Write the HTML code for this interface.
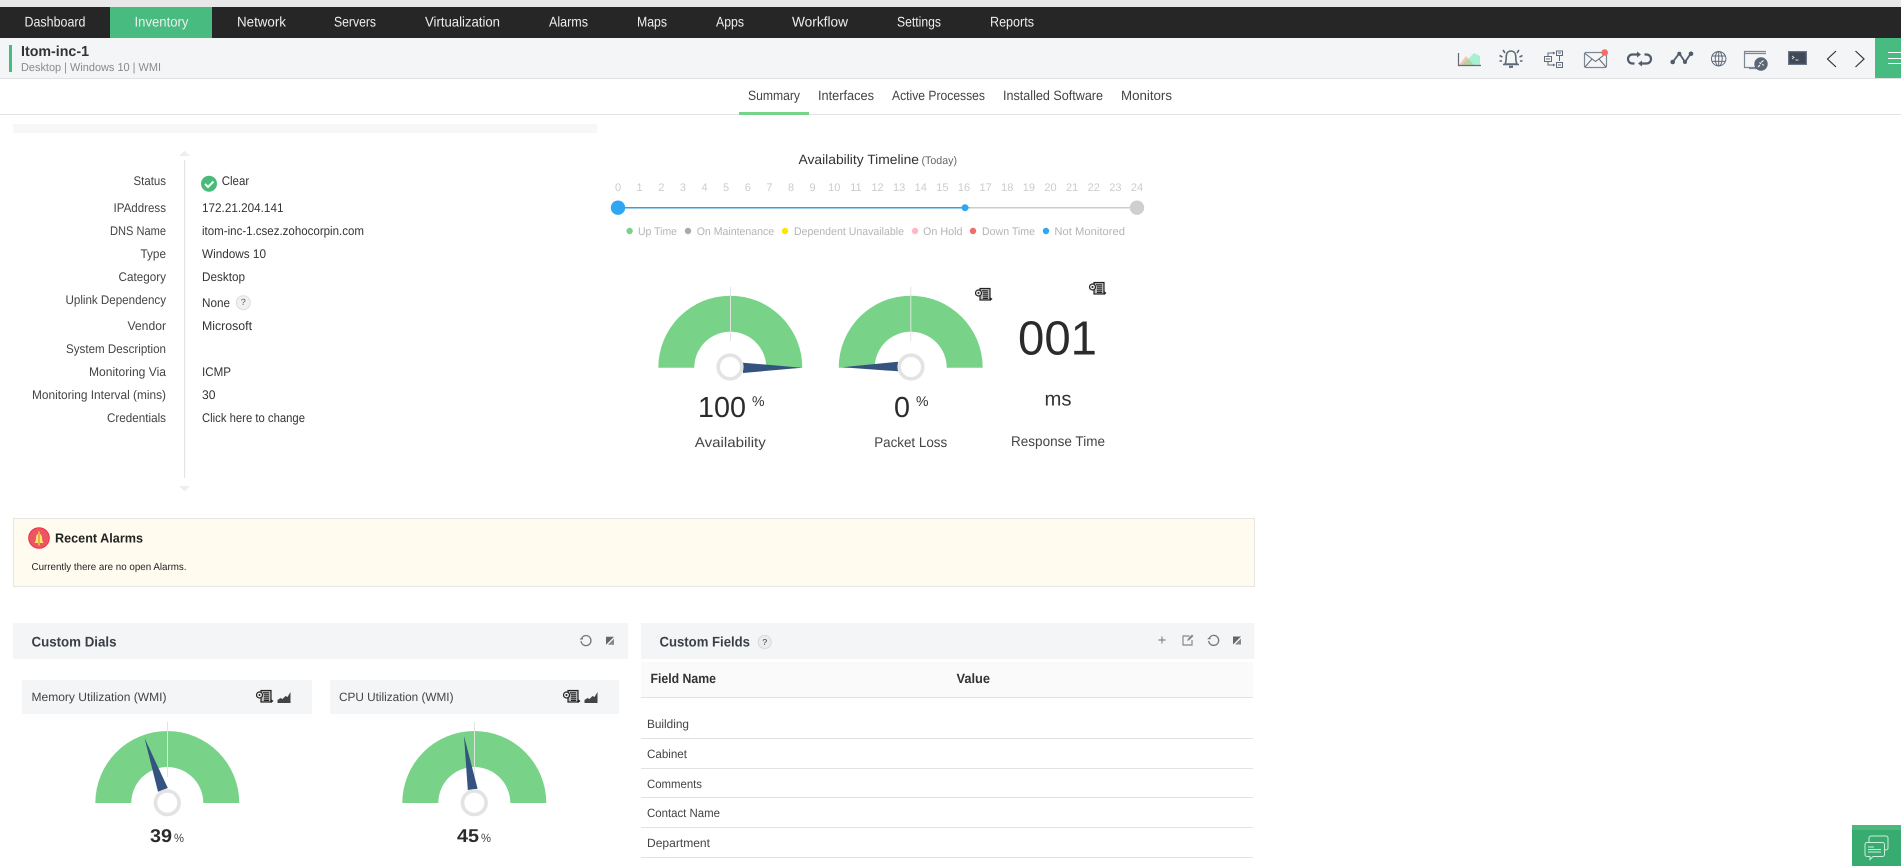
<!DOCTYPE html>
<html lang="en">
<head>
<meta charset="utf-8">
<title>Itom-inc-1</title>
<style>
html,body{margin:0;padding:0;background:#fff;width:1901px;height:866px;overflow:hidden}
svg{display:block;filter:blur(.35px)}
text{font-family:"Liberation Sans",sans-serif;text-rendering:geometricPrecision}
.nav{font-size:14px;fill:#eee}
.tab{font-size:13.5px;fill:#444}
.l{font-size:12.5px;fill:#444}
.v{font-size:12.5px;fill:#333}
.h{font-size:11px;fill:#ccc}
.lg{font-size:11px;fill:#b4b4b4}
.gl{font-size:14px;fill:#444}
.r{font-size:12px;fill:#444}
.ic{fill:none;stroke:#5f6a78;stroke-width:1.2}
</style>
</head>
<body>
<svg width="1901" height="866" viewBox="0 0 1901 866" xmlns="http://www.w3.org/2000/svg">
<defs>
<g id="rep">
<rect x="5" y="0.5" width="10" height="11.5" fill="#bbb" stroke="#222" stroke-width="1.2"/>
<path d="M7 2.800h6M8 4.800h5M8 6.800h5M8 8.800h5M8 10.500h5" stroke="#222" stroke-width="1.100"/>
<circle cx="3.500" cy="5" r="3" fill="#eee" stroke="#222" stroke-width="1.200"/>
<circle cx="3.500" cy="5" r="1" fill="#222"/>
<path d="M15 9l2.500 2-2.500 2z" fill="#222"/>
</g>
<path id="mini" d="M0 11V8l3-2 2 1 3-3 2 1 3-5v11z" fill="#444"/>
<g id="ref" fill="none" stroke="#777" stroke-width="1.300">
<path d="M-3.400-3.800A5 5 0 1 1-5 0.400"/><path d="M-6.500-1.200h3.400v-3.400z" fill="#777" stroke="none"/>
</g>
<g id="exp"><path d="M-4-4H4L-4 4z" fill="#666"/><path d="M4-2V4H-2z" fill="#888"/></g>
<path id="arc" d="M-72 0A72 72 0 0 1 72 0H36A36 36 0 0 0-36 0Z" fill="#78d389"/>
<g id="hub"><circle r="11.800" fill="#fff" stroke="#e3e3e3" stroke-width="3.600"/></g>
</defs>

<rect width="1901" height="866" fill="#fff"/>
<rect width="1901" height="7" fill="#e8e8e8"/>

<!-- nav -->
<rect y="7" width="1901" height="31" fill="#262626"/>
<rect x="110" y="7" width="102" height="31" fill="#48bb80"/>
<text class="nav" x="24.500" y="26.700" textLength="61" lengthAdjust="spacingAndGlyphs">Dashboard</text>
<text class="nav" x="134.500" y="26.700" textLength="54" lengthAdjust="spacingAndGlyphs">Inventory</text>
<text class="nav" x="237" y="26.700" textLength="49" lengthAdjust="spacingAndGlyphs">Network</text>
<text class="nav" x="334" y="26.700" textLength="42" lengthAdjust="spacingAndGlyphs">Servers</text>
<text class="nav" x="425" y="26.700" textLength="75" lengthAdjust="spacingAndGlyphs">Virtualization</text>
<text class="nav" x="549" y="26.700" textLength="39" lengthAdjust="spacingAndGlyphs">Alarms</text>
<text class="nav" x="637" y="26.700" textLength="30" lengthAdjust="spacingAndGlyphs">Maps</text>
<text class="nav" x="716" y="26.700" textLength="28" lengthAdjust="spacingAndGlyphs">Apps</text>
<text class="nav" x="792" y="26.700" textLength="56" lengthAdjust="spacingAndGlyphs">Workflow</text>
<text class="nav" x="897" y="26.700" textLength="44" lengthAdjust="spacingAndGlyphs">Settings</text>
<text class="nav" x="990" y="26.700" textLength="44" lengthAdjust="spacingAndGlyphs">Reports</text>

<!-- header -->
<rect y="38" width="1901" height="40" fill="#f4f5f7"/>
<rect y="78" width="1901" height="1" fill="#dfe1e3"/>
<rect x="9" y="45" width="3" height="27" fill="#48bb80"/>
<text x="21" y="56" font-size="14.500" font-weight="bold" fill="#333" textLength="68" lengthAdjust="spacingAndGlyphs">Itom-inc-1</text>
<text x="21" y="71" font-size="11.500" fill="#8a8a8a" textLength="140" lengthAdjust="spacingAndGlyphs">Desktop | Windows 10  | WMI</text>

<!-- toolbar icons -->
<path d="M1459 65L1466 56 1474 65z" fill="#f8c4ac"/>
<path d="M1462 65L1474 53 1480 56V65z" fill="#a8f0d4"/>
<path d="M1462 65L1466 60 1468.500 59 1474 65z" fill="#b9cfa8"/>
<path d="M1458.500 53V65.500H1481" class="ic"/>

<g class="ic" style="stroke-width:1.600">
<path d="M1505 64c1.200-2 1.200-4 1.200-7 0-4 2-6 4.800-6s4.800 2 4.800 6c0 3 0 5 1.200 7z"/>
<path d="M1503 64.500h16M1503 50l2 3M1519 50l-2 3M1499.500 55.500l3 1.500M1522.500 55.500l-3 1.500M1499.500 61h2.500M1522.500 61h-2.500"/>
<path d="M1509 66.800h4" style="stroke-width:2.200"/>
</g>

<g class="ic" style="stroke-width:1">
<rect x="1556.500" y="51" width="6" height="4.500"/>
<rect x="1544.500" y="56.500" width="7" height="5"/>
<rect x="1556.500" y="62.500" width="6" height="5"/>
<path d="M1548 56v-3h6M1548 62v3h6M1559.500 56v5M1546 59h4M1558 53h3M1558 65h3"/>
<path d="M1553 51.500l2.500 1.500-2.500 1.500zM1553 63.500l2.500 1.500-2.500 1.500z" fill="#5f6a78" stroke="none"/>
</g>

<rect x="1584.500" y="52.500" width="22" height="15" rx="1.500" fill="none" stroke="#7d8794" stroke-width="1.200"/>
<path d="M1585 53.500l10.500 8 10.500-8M1585 67l7-8M1606 67l-7-8" class="ic" style="stroke-width:1"/>
<circle cx="1604.700" cy="52.500" r="3.300" fill="#f56c6c"/>

<g fill="none" stroke="#515c6b" stroke-width="2.200">
<path d="M1638 54.500h-5.500a4.300 4.300 0 0 0 0 9h2"/>
<path d="M1641 63.500h5.500a4.300 4.300 0 0 0 0-9h-2"/>
</g>
<path d="M1637 51.500l4 3-4 3zM1642 60.500l-4 3 4 3z" fill="#515c6b"/>

<polyline points="1672.700,62 1679.300,53.300 1685,62 1691,53.300" fill="none" stroke="#515c6b" stroke-width="1.800"/>
<g fill="#515c6b"><circle cx="1672.700" cy="62" r="2.300"/><circle cx="1679.300" cy="53.800" r="2"/><circle cx="1685" cy="62" r="2"/><circle cx="1691" cy="53.800" r="2.300"/></g>

<g class="ic" style="stroke-width:1">
<circle cx="1718.700" cy="58.700" r="7.200"/>
<ellipse cx="1718.700" cy="58.700" rx="3.500" ry="7.200"/>
<path d="M1718.700 51.500v14.400M1712 56h13.400M1712 61.400h13.400"/>
</g>

<g fill="none" stroke="#7d8794" stroke-width="1.200">
<path d="M1766 51.500h-21.500v16H1756M1745 53.500h21M1749 68.500h8"/>
</g>
<circle cx="1761" cy="64" r="6.700" fill="#5b6675"/>
<path d="M1758 67l2-2M1761 62.500l2.500-2M1759.500 62.500l1.500 1.500M1762.500 64l1 1.500" stroke="#fff" stroke-width="1.100" fill="none"/>

<rect x="1788" y="51" width="19" height="14" fill="#6a7686"/>
<rect x="1789.200" y="52.200" width="16.600" height="11.600" fill="#3f4958"/>
<path d="M1792 56l2 1.500-2 1.500M1795.500 60h3" stroke="#ddd" stroke-width=".9" fill="none"/>

<polyline points="1836,51 1827.500,59 1836,67" fill="none" stroke="#333" stroke-width="1.200"/>
<polyline points="1855.500,51 1864,59 1855.500,67" fill="none" stroke="#333" stroke-width="1.200"/>
<rect x="1875" y="38" width="26" height="40" fill="#48bb80"/>
<path d="M1888 52.500h13M1888 58.500h13M1888 63.500h13" stroke="#fff" stroke-width="1"/>

<!-- tabs -->
<text class="tab" x="748" y="99.800" textLength="52" lengthAdjust="spacingAndGlyphs">Summary</text>
<text class="tab" x="818" y="99.800" textLength="56" lengthAdjust="spacingAndGlyphs">Interfaces</text>
<text class="tab" x="892" y="99.800" textLength="93" lengthAdjust="spacingAndGlyphs">Active Processes</text>
<text class="tab" x="1003" y="99.800" textLength="100" lengthAdjust="spacingAndGlyphs">Installed Software</text>
<text class="tab" x="1121" y="99.800" textLength="51" lengthAdjust="spacingAndGlyphs">Monitors</text>
<rect y="114" width="1901" height="1" fill="#e2e3e5"/>
<rect x="739" y="112" width="70" height="3" fill="#77d38a"/>

<rect x="13" y="124" width="584" height="9" fill="#f6f7f8"/>

<!-- details -->
<rect x="184" y="160" width="1.200" height="318" fill="#e4e4e4"/>
<path d="M179 156l5.500-5.500 5.500 5.500z" fill="#eee"/>
<path d="M179 486l5.500 5.500 5.500-5.500z" fill="#eee"/>

<text class="l" text-anchor="end" x="166" y="185" textLength="32.500" lengthAdjust="spacingAndGlyphs">Status</text>
<text class="l" text-anchor="end" x="166" y="212" textLength="52.500" lengthAdjust="spacingAndGlyphs">IPAddress</text>
<text class="l" text-anchor="end" x="166" y="235" textLength="56" lengthAdjust="spacingAndGlyphs">DNS Name</text>
<text class="l" text-anchor="end" x="166" y="258" textLength="25.500" lengthAdjust="spacingAndGlyphs">Type</text>
<text class="l" text-anchor="end" x="166" y="281" textLength="47.500" lengthAdjust="spacingAndGlyphs">Category</text>
<text class="l" text-anchor="end" x="166" y="304" textLength="100.500" lengthAdjust="spacingAndGlyphs">Uplink Dependency</text>
<text class="l" text-anchor="end" x="166" y="330" textLength="38.500" lengthAdjust="spacingAndGlyphs">Vendor</text>
<text class="l" text-anchor="end" x="166" y="353" textLength="100" lengthAdjust="spacingAndGlyphs">System Description</text>
<text class="l" text-anchor="end" x="166" y="376" textLength="77" lengthAdjust="spacingAndGlyphs">Monitoring Via</text>
<text class="l" text-anchor="end" x="166" y="399" textLength="134" lengthAdjust="spacingAndGlyphs">Monitoring Interval (mins)</text>
<text class="l" text-anchor="end" x="166" y="422" textLength="59" lengthAdjust="spacingAndGlyphs">Credentials</text>

<circle cx="209" cy="183.700" r="8" fill="#48bb78"/>
<path d="M205 184l3 3 5.500-5.500" fill="none" stroke="#fff" stroke-width="2"/>
<text class="v" x="221.700" y="185" textLength="27.500" lengthAdjust="spacingAndGlyphs">Clear</text>
<text class="v" x="202" y="212" textLength="81.500" lengthAdjust="spacingAndGlyphs">172.21.204.141</text>
<text class="v" x="202" y="235" textLength="162" lengthAdjust="spacingAndGlyphs">itom-inc-1.csez.zohocorpin.com</text>
<text class="v" x="202" y="258" textLength="64" lengthAdjust="spacingAndGlyphs">Windows 10</text>
<text class="v" x="202" y="281" textLength="43" lengthAdjust="spacingAndGlyphs">Desktop</text>
<text class="v" x="202" y="307" textLength="28" lengthAdjust="spacingAndGlyphs">None</text>
<circle cx="243.300" cy="302.700" r="7" fill="#f1f1f1" stroke="#ddd"/>
<text x="243.300" y="305" text-anchor="middle" font-size="9" fill="#555">?</text>
<text class="v" x="202" y="330" textLength="50" lengthAdjust="spacingAndGlyphs">Microsoft</text>
<text class="v" x="202" y="376" textLength="29" lengthAdjust="spacingAndGlyphs">ICMP</text>
<text class="v" x="202" y="399" textLength="13.500" lengthAdjust="spacingAndGlyphs">30</text>
<text class="v" x="202" y="422" textLength="103" lengthAdjust="spacingAndGlyphs">Click here to change</text>

<!-- timeline -->
<text x="798.500" y="164" font-size="13.500" fill="#333" textLength="120.500" lengthAdjust="spacingAndGlyphs">Availability Timeline</text>
<text x="921.500" y="164" font-size="11" fill="#666" textLength="35.500" lengthAdjust="spacingAndGlyphs">(Today)</text>
<g text-anchor="middle">
<text class="h" x="618" y="191">0</text><text class="h" x="639.600" y="191">1</text><text class="h" x="661.300" y="191">2</text><text class="h" x="682.900" y="191">3</text><text class="h" x="704.500" y="191">4</text><text class="h" x="726.100" y="191">5</text><text class="h" x="747.800" y="191">6</text><text class="h" x="769.400" y="191">7</text><text class="h" x="791" y="191">8</text><text class="h" x="812.600" y="191">9</text><text class="h" x="834.300" y="191">10</text><text class="h" x="855.900" y="191">11</text><text class="h" x="877.500" y="191">12</text><text class="h" x="899.100" y="191">13</text><text class="h" x="920.800" y="191">14</text><text class="h" x="942.400" y="191">15</text><text class="h" x="964" y="191">16</text><text class="h" x="985.600" y="191">17</text><text class="h" x="1007.300" y="191">18</text><text class="h" x="1028.900" y="191">19</text><text class="h" x="1050.500" y="191">20</text><text class="h" x="1072.100" y="191">21</text><text class="h" x="1093.800" y="191">22</text><text class="h" x="1115.400" y="191">23</text><text class="h" x="1137" y="191">24</text>
</g>
<rect x="970" y="207" width="167" height="1.500" fill="#ccc"/>
<rect x="965" y="207" width="5" height="1.500" fill="#78d389"/>
<rect x="618" y="207" width="347" height="1.500" fill="#3a9fd8"/>
<circle cx="618" cy="207.700" r="7.200" fill="#2fa6f2"/>
<circle cx="965" cy="207.700" r="3.500" fill="#2fa6f2"/>
<circle cx="1137" cy="207.700" r="7.200" fill="#cfcfcf"/>

<circle cx="629.600" cy="231" r="3.200" fill="#78d389"/><text class="lg" x="638" y="235" textLength="39" lengthAdjust="spacingAndGlyphs">Up Time</text>
<circle cx="688" cy="231" r="3.200" fill="#aaa"/><text class="lg" x="696.700" y="235" textLength="77.500" lengthAdjust="spacingAndGlyphs">On Maintenance</text>
<circle cx="785" cy="231" r="3.200" fill="#ffe600"/><text class="lg" x="794" y="235" textLength="110" lengthAdjust="spacingAndGlyphs">Dependent Unavailable</text>
<circle cx="915" cy="231" r="3.200" fill="#ffb6c6"/><text class="lg" x="923" y="235" textLength="39.500" lengthAdjust="spacingAndGlyphs">On Hold</text>
<circle cx="973" cy="231" r="3.200" fill="#f26c6c"/><text class="lg" x="982" y="235" textLength="53" lengthAdjust="spacingAndGlyphs">Down Time</text>
<circle cx="1046" cy="231" r="3.200" fill="#2fa6f2"/><text class="lg" x="1054.400" y="235" textLength="70.600" lengthAdjust="spacingAndGlyphs">Not Monitored</text>

<!-- gauges top -->
<use href="#arc" x="730.300" y="367.700"/>
<rect x="730" y="287" width="1" height="54" fill="#dfe5df"/>
<path d="M802 367.700L743 362.700V373z" fill="#34547f"/>
<use href="#hub" x="730" y="367"/>
<text x="698" y="417" font-size="29" fill="#2b2b2b" textLength="48" lengthAdjust="spacingAndGlyphs">100</text>
<text x="752" y="406" font-size="14" fill="#333" textLength="12.500" lengthAdjust="spacingAndGlyphs">%</text>
<text class="gl" text-anchor="middle" x="730.300" y="447" textLength="71" lengthAdjust="spacingAndGlyphs">Availability</text>

<use href="#arc" x="910.700" y="367.700"/>
<rect x="910.300" y="287" width="1" height="54" fill="#dfe5df"/>
<path d="M842 367.200L898 361.700V371.300z" fill="#34547f"/>
<use href="#hub" x="911" y="367"/>
<text x="894" y="417" font-size="29" fill="#2b2b2b" textLength="16" lengthAdjust="spacingAndGlyphs">0</text>
<text x="916" y="406" font-size="14" fill="#333" textLength="12.500" lengthAdjust="spacingAndGlyphs">%</text>
<text class="gl" text-anchor="middle" x="910.700" y="447" textLength="73" lengthAdjust="spacingAndGlyphs">Packet Loss</text>

<use href="#rep" x="975" y="288"/>
<use href="#rep" x="1089" y="282"/>
<text x="1018" y="354.500" font-size="48" fill="#2b2b2b" textLength="79" lengthAdjust="spacingAndGlyphs">001</text>
<text x="1044.500" y="405.500" font-size="20" fill="#333" textLength="27" lengthAdjust="spacingAndGlyphs">ms</text>
<text class="gl" x="1011" y="446" textLength="94" lengthAdjust="spacingAndGlyphs">Response Time</text>

<!-- alarms -->
<rect x="13.500" y="518.500" width="1241" height="68" fill="#fffbef" stroke="#e6e6e0"/>
<circle cx="39" cy="538" r="10.300" fill="#ee5563" stroke="#ef2f49" stroke-width="1"/>
<path d="M34.500 543c1-1.500 1.500-3 1.500-5.500 0-2 1.300-3.800 3-3.800s3 1.800 3 3.800c0 2.500.5 4 1.500 5.500z" fill="#fde27a"/>
<rect x="38" y="531.500" width="2" height="14" fill="#e8b53a"/>
<text x="55" y="542.500" font-size="13" font-weight="bold" fill="#222" textLength="88" lengthAdjust="spacingAndGlyphs">Recent Alarms</text>
<text x="31.500" y="570" font-size="10" fill="#222" textLength="155" lengthAdjust="spacingAndGlyphs">Currently there are no open Alarms.</text>

<!-- custom dials -->
<rect x="13" y="623" width="615" height="36" fill="#f4f5f7"/>
<text x="31.500" y="646.500" font-size="14" font-weight="bold" fill="#3a3f45" textLength="85" lengthAdjust="spacingAndGlyphs">Custom Dials</text>
<use href="#ref" x="586" y="640.700"/>
<use href="#exp" x="610" y="640.700"/>

<rect x="22" y="680" width="290" height="34" fill="#f4f5f7"/>
<text class="r" x="31.500" y="701" textLength="135" lengthAdjust="spacingAndGlyphs">Memory Utilization (WMI)</text>
<use href="#rep" x="256" y="690"/>
<use href="#mini" x="277.500" y="692"/>
<rect x="330" y="680" width="289" height="34" fill="#f4f5f7"/>
<text class="r" x="339" y="701" textLength="114.500" lengthAdjust="spacingAndGlyphs">CPU Utilization (WMI)</text>
<use href="#rep" x="563" y="690"/>
<use href="#mini" x="584.500" y="692"/>

<use href="#arc" x="167.300" y="803"/>
<rect x="167" y="722" width="1" height="55" fill="#dfe5df"/>
<path d="M144.500 738L158 791.700 167.800 788z" fill="#34547f"/>
<use href="#hub" x="167.300" y="802.700"/>
<text x="150" y="842" font-size="18.500" font-weight="bold" fill="#2b2b2b" textLength="22" lengthAdjust="spacingAndGlyphs">39</text>
<text x="174" y="842" font-size="12" fill="#444" textLength="10" lengthAdjust="spacingAndGlyphs">%</text>

<use href="#arc" x="474.300" y="803"/>
<rect x="474" y="722" width="1" height="55" fill="#dfe5df"/>
<path d="M464 736L467.800 790 477.600 788.700z" fill="#34547f"/>
<use href="#hub" x="474.300" y="802.700"/>
<text x="457" y="842" font-size="18.500" font-weight="bold" fill="#2b2b2b" textLength="22" lengthAdjust="spacingAndGlyphs">45</text>
<text x="481" y="842" font-size="12" fill="#444" textLength="10" lengthAdjust="spacingAndGlyphs">%</text>

<!-- custom fields -->
<rect x="641" y="623" width="613.500" height="36" fill="#f4f5f7"/>
<text x="659.500" y="646.500" font-size="14" font-weight="bold" fill="#3a3f45" textLength="90.500" lengthAdjust="spacingAndGlyphs">Custom Fields</text>
<circle cx="764.700" cy="642" r="6.500" fill="#ededed" stroke="#d8d8d8"/>
<text x="764.700" y="645" text-anchor="middle" font-size="8.500" fill="#333">?</text>
<path d="M1158.500 640h7M1162 636.500v7" stroke="#888" stroke-width="1.200"/>
<path d="M1189.500 636h-6.500v9h9v-5" fill="none" stroke="#888" stroke-width="1.200"/>
<path d="M1187 641l1-2.500 4-4 1.500 1.500-4 4z" fill="#888"/>
<use href="#ref" x="1213.700" y="640.500"/>
<use href="#exp" x="1237" y="640.500"/>

<rect x="641" y="662" width="612" height="35" fill="#fafafa"/>
<rect x="641" y="697" width="612" height="1" fill="#e2e2e2"/>
<text x="650.500" y="683" font-size="13.500" font-weight="bold" fill="#333" textLength="65.500" lengthAdjust="spacingAndGlyphs">Field Name</text>
<text x="956.500" y="683" font-size="13.500" font-weight="bold" fill="#333" textLength="33.500" lengthAdjust="spacingAndGlyphs">Value</text>

<text class="r" x="647" y="727.800" textLength="42" lengthAdjust="spacingAndGlyphs">Building</text>
<rect x="641" y="738" width="612" height="1" fill="#e2e2e2"/>
<text class="r" x="647" y="757.800" textLength="40" lengthAdjust="spacingAndGlyphs">Cabinet</text>
<rect x="641" y="768" width="612" height="1" fill="#e2e2e2"/>
<text class="r" x="647" y="787.800" textLength="55" lengthAdjust="spacingAndGlyphs">Comments</text>
<rect x="641" y="797" width="612" height="1" fill="#e2e2e2"/>
<text class="r" x="647" y="816.800" textLength="73" lengthAdjust="spacingAndGlyphs">Contact Name</text>
<rect x="641" y="827" width="612" height="1" fill="#e2e2e2"/>
<text class="r" x="647" y="846.800" textLength="63" lengthAdjust="spacingAndGlyphs">Department</text>
<rect x="641" y="857" width="612" height="1" fill="#e2e2e2"/>

<!-- chat -->
<rect x="1852" y="825" width="49" height="41" fill="#37ab70"/>
<rect x="1852" y="825" width="49" height="5" fill="#4bb87c"/>
<path d="M1869 842v-4a2 2 0 0 1 2-2h15a2 2 0 0 1 2 2v10a2 2 0 0 1-2 2h-1" fill="none" stroke="#cdeedd" stroke-width="1"/>
<path d="M1867 842.500h15.500a2 2 0 0 1 2 2v10a2 2 0 0 1-2 2h-9.500l-3 3v-3h-3a2 2 0 0 1-2-2v-10a2 2 0 0 1 2-2z" fill="#37ab70" stroke="#cdeedd" stroke-width="1"/>
<path d="M1868 847h6M1868 849.500h13M1868 852h13" stroke="#cdeedd" stroke-width="1"/>
</svg>
</body>
</html>
